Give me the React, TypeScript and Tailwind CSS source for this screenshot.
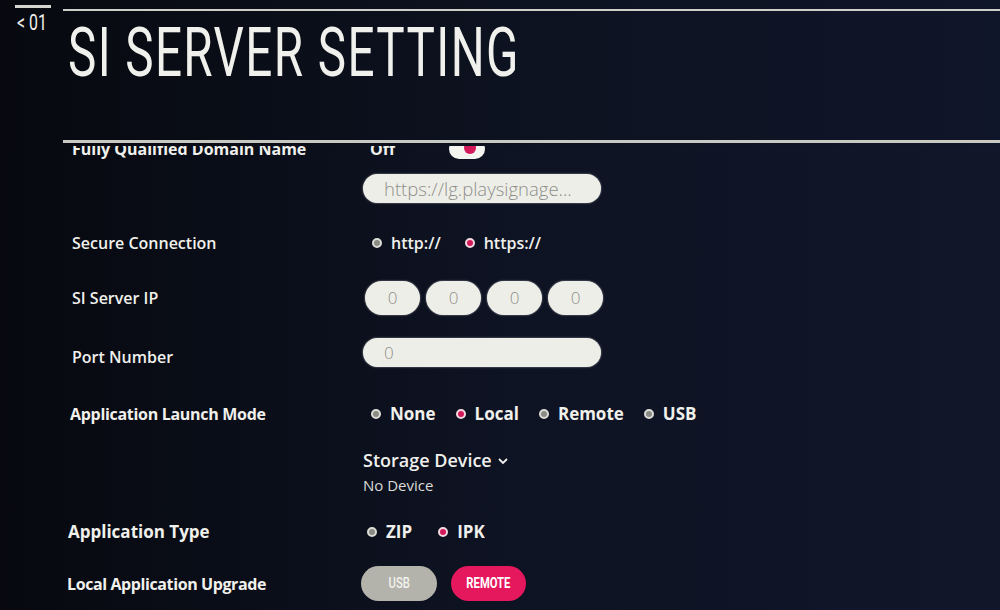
import React from "react";

const font = { fontFamily: "'Open Sans', 'Noto Sans', sans-serif" };

const Radio = ({ label, on }: { label: string; on?: boolean }) => (
  <div className="flex items-center gap-[9px]">
    <span
      className={
        "w-[10px] h-[10px] rounded-full border-[2px] " +
        (on ? "bg-[#d4195a] border-[#f3d9e0]" : "bg-[#8a8a86] border-[#dcdcd6]")
      }
    />
    <span>{label}</span>
  </div>
);

const Pill = ({ children, className }: { children?: React.ReactNode; className: string }) => (
  <div className={"rounded-full bg-[#eeeee8] text-[#8e8e8a] flex items-center shadow-[0_0_2px_rgba(255,255,255,0.6)] " + className}>
    {children}
  </div>
);

export default function App() {
  return (
    <div className="w-full h-[610px] overflow-hidden bg-[#0e1323] text-[#f0f0ec]" style={font}>
      {/* header */}
      <div className="flex h-[146px] pb-[3px] bg-gradient-to-r from-[#07090f] via-[#0d1220] to-[#101629]">
        <div className="w-[63px] shrink-0 pl-[15px] pt-[5px]">
          <div className="w-[36px] h-[3px] bg-[#d6d6d0]" />
          <div className="mt-[4px] ml-[2px] text-[22px] leading-[22px] origin-left scale-x-[0.72] whitespace-nowrap" style={{ fontFamily: "Roboto, sans-serif" }}>
            &lt; 01
          </div>
        </div>
        <div className="flex-1 flex flex-col pt-[9px]">
          <div className="h-[2px] bg-[#cfcfca]" />
          <div className="flex-1 pl-[5px] pt-[8px]">
            <div
              className="text-[68px] leading-[68px] font-normal origin-left scale-x-[0.7] whitespace-nowrap tracking-[2px]"
              style={{ fontFamily: "Roboto, sans-serif" }}
            >
              SI SERVER SETTING
            </div>
          </div>
          <div className="h-[3px] bg-[#c9c9c4]" />
        </div>
      </div>

      {/* scroll list */}
      <div className="h-[464px] overflow-hidden pl-[72px] bg-gradient-to-r from-[#07090f] via-[#0e1323] to-[#111729]">
        {/* clipped row */}
        <div className="flex items-center h-[26px] mt-[-10px] font-bold text-[16px]">
          <div className="w-[291px]">Fully Qualified Domain Name</div>
          <div className="w-[86px] pl-[7px]">Off</div>
          <div className="relative w-[36px] h-[20px] rounded-full bg-[#f4f4f0]">
            <span className="absolute left-[15px] top-[3px] w-[12px] h-[12px] rounded-full bg-[#d4195a]" />
          </div>
        </div>

        <div className="ml-[291px] mt-[12px]">
          <Pill className="w-[238px] h-[29px] pl-[21px] text-[18.5px] font-light">https://lg.playsignage...</Pill>
        </div>

        <div className="flex items-center h-[30px] mt-[25px] text-[16px] font-semibold">
          <div className="w-[293px]">Secure Connection</div>
          <div className="flex gap-[24px] pl-[7px]">
            <Radio label="http://" />
            <Radio label="https://" on />
          </div>
        </div>

        <div className="flex items-center h-[34px] mt-[23px] text-[16px] font-semibold">
          <div className="w-[293px]">SI Server IP</div>
          <div className="flex gap-[6px]">
            {[0, 1, 2, 3].map((i) => (
              <Pill key={i} className="w-[55px] h-[34px] justify-center text-[17px] font-light">0</Pill>
            ))}
          </div>
        </div>

        <div className="flex items-center h-[29px] mt-[23px] text-[16px] font-semibold">
          <div className="w-[291px] pt-[9px]">Port Number</div>
          <Pill className="w-[238px] h-[29px] pl-[21px] text-[17px] font-light">0</Pill>
        </div>

        <div className="flex items-center h-[30px] mt-[32px] text-[17px] font-bold -ml-[2px]">
          <div className="w-[295px] text-[16px] tracking-[-0.3px]">Application Launch Mode</div>
          <div className="flex gap-[20px] pl-[6px]">
            <Radio label="None" />
            <Radio label="Local" on />
            <Radio label="Remote" />
            <Radio label="USB" />
          </div>
        </div>

        <div className="ml-[291px] mt-[20px]">
          <div className="flex items-center h-[22px] text-[18px] font-semibold">
            Storage Device
            <svg width="12" height="12" viewBox="0 0 12 12" className="ml-[5px] mt-[1px]">
              <path d="M2 4 L6 8 L10 4" fill="none" stroke="#f0f0ec" strokeWidth="1.8" />
            </svg>
          </div>
          <div className="h-[20px] mt-[4px] flex items-center text-[15px] text-[#dcdcd8]">No Device</div>
        </div>

        <div className="flex items-center h-[30px] mt-[22px] text-[17px] font-bold -ml-[4px]">
          <div className="w-[299px]">Application Type</div>
          <div className="flex gap-[26px]">
            <Radio label="ZIP" />
            <Radio label="IPK" on />
          </div>
        </div>

        <div className="flex items-center h-[35px] mt-[19px] text-[16px] font-bold -ml-[5px]">
          <div className="w-[294px] tracking-[-0.4px]">Local Application Upgrade</div>
          <div className="flex gap-[14px]">
            <div className="w-[76px] h-[35px] rounded-full bg-[#b3b3ab] text-[#f2f2ee] flex items-center justify-center">
              <span className="inline-block text-[15px] font-medium scale-x-[0.75]" style={{ fontFamily: "Roboto, sans-serif" }}>USB</span>
            </div>
            <div className="w-[75px] h-[35px] rounded-full bg-[#e5175d] text-white flex items-center justify-center">
              <span className="inline-block text-[15px] font-bold scale-x-[0.75]" style={{ fontFamily: "Roboto, sans-serif" }}>REMOTE</span>
            </div>
          </div>
        </div>
      </div>
    </div>
  );
}
